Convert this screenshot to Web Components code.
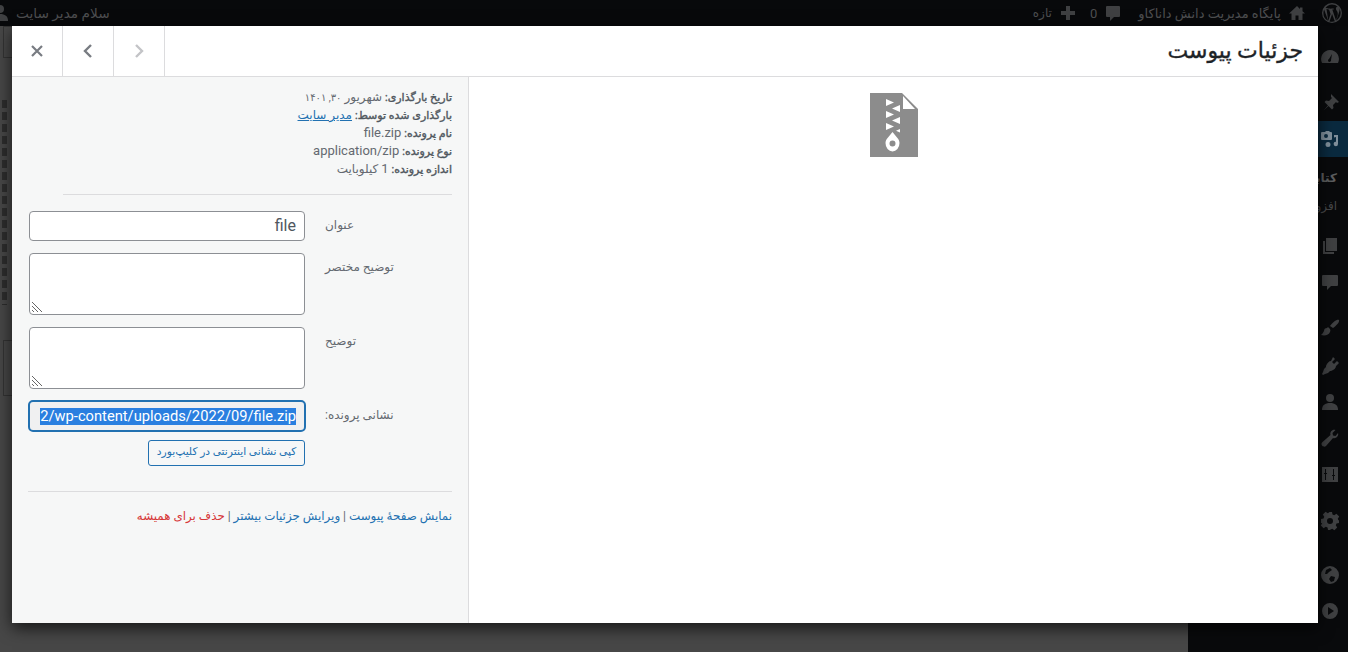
<!DOCTYPE html>
<html lang="fa" dir="rtl">
<head>
<meta charset="utf-8">
<title>جزئیات پیوست</title>
<style>
  html, body { margin: 0; height: 100%; overflow: hidden; background: #474747; }
  body { font-family: Roboto, "DejaVu Sans", sans-serif; }
</style>
</head>
<body>
<wp-backdrop></wp-backdrop>
<attachment-modal>
  <attachment-preview slot="preview"></attachment-preview>
  <attachment-details slot="details"></attachment-details>
</attachment-modal>

<script>
// the dimmed admin screen behind the modal
class WpBackdrop extends HTMLElement {
  constructor() {
    super();
    let shadowRoot = this.attachShadow({mode: 'open'});
    shadowRoot.innerHTML = `
      <style>
        :host {
          display: flex;
          flex-direction: column;
          height: 652px;
          color: #4e4f51;
          font-size: 13px;
        }
        .bar {
          height: 26px;
          flex: none;
          background: #08090b;
          display: flex;
          align-items: center;
          padding: 0 6px 0 0;
        }
        .bar svg { fill: #3f4042; display: block; }
        .item { display: flex; align-items: center; gap: 6px; margin-left: 15px; white-space: nowrap; }
        .spacer { flex: 1; }
        .hello { margin: 0; }
        .hello span { font-size: 13.7px; }
        .main { flex: 1; display: flex; min-height: 0; }
        .menu {
          width: 160px;
          flex: none;
          background: #090a0c;
          display: flex;
          flex-direction: column;
          align-items: flex-start;
          padding-top: 13px;
          box-sizing: border-box;
        }
        .menu svg { fill: #3f4042; display: block; }
        .menu .row { width: 160px; box-sizing: border-box; padding-right: 8px; height: 36px; display: flex; align-items: center; flex: none; }
        .menu .active { background: #0a2a3f; }
        .menu .active svg { fill: #7f8f9b; }
        .menu .sub { height: 28px; font-size: 12px; color: #47484a; display: flex; align-items: center; flex: none; padding-right: 11px; }
        .menu .sub.b { font-weight: bold; color: #5c5d5f; margin-top: 7px; }
        .content {
          flex: 1;
          background: #474747;
          display: flex;
          flex-direction: column;
          align-items: flex-end;
        }
        .ghost { width: 20px; margin-left: 3px; border: 1px solid #333; box-sizing: border-box; flex: none; }
        .dots {
          width: 5px;
          height: 205px;
          margin: 42px 0 0 2px;
          flex: none;
          background: repeating-linear-gradient(#2d2d2d 0 8px, transparent 8px 12px);
        }
      </style>
      <div class="bar">
        <div class="item"><svg width="20" height="20" viewBox="0 0 20 20"><path fill-rule="evenodd" d="M10 0a10 10 0 1 0 0 20 10 10 0 0 0 0-20zm0 1.400a8.600 8.600 0 0 1 5.800 2.300c-1-.1-1.900.6-1.900 1.700 0 1 .6 1.800 1.100 2.600.4.700.8 1.600.8 2.900 0 .9-.3 2-.8 3.400l-1 3.300-3.700-11c.6 0 1.200-.1 1.200-.1.6-.1.5-.9 0-.9 0 0-1.700.1-2.800.1-1 0-2.700-.1-2.700-.1-.6 0-.7.9-.1.9 0 0 .5.100 1.100.1l1.600 4.400-2.300 6.700L4.500 5.900c.6 0 1.200-.1 1.200-.1.6-.1.5-.9 0-.9 0 0-1.300.1-2.200.1A8.600 8.600 0 0 1 10 1.400zM1.400 10c0-1.200.3-2.400.7-3.500l4.100 11.300A8.600 8.600 0 0 1 1.400 10zm8.700 1 2.600 7.100c0 .1.100.1.100.2a8.600 8.600 0 0 1-5.300.1zm7-5.400c.9 1.300 1.500 2.800 1.500 4.400 0 3.200-1.700 6-4.300 7.400l2.600-7.600c.5-1.200.6-2.200.6-3 0-.3 0-.5-.4-.9z"/></svg></div>
        <div class="item"><svg width="20" height="20" viewBox="0 0 20 20"><path d="M10 3 2 10.500h2.500V17h4v-4.500h3V17h4v-6.500H18l-2.500-2.300V4.500h-2.500v1.400z"/></svg><span>پایگاه مدیریت دانش داناکاو</span></div>
        <div class="item" style="margin-left:12px"><svg width="20" height="20" viewBox="0 0 20 20"><path d="M4 3h12a1 1 0 0 1 1 1v9a1 1 0 0 1-1 1h-5l-4 4v-4H4a1 1 0 0 1-1-1V4a1 1 0 0 1 1-1z"/></svg><span>0</span></div>
        <div class="item"><svg width="20" height="20" viewBox="0 0 20 20"><path d="M8 3h4v5h5v4h-5v5H8v-5H3V8h5z"/></svg><span style="font-size:12px">تازه</span></div>
        <div class="spacer"></div>
        <div class="item hello"><span>سلام مدیر سایت</span><svg width="10" height="20" viewBox="10 0 10 20"><circle cx="10" cy="6" r="4"/><path d="M2 18c0-5 3-7 8-7s8 2 8 7z"/></svg></div>
      </div>
      <div class="main">
        <div class="menu">
          <div class="row"><svg width="20" height="20" viewBox="0 0 20 20"><path fill-rule="evenodd" d="M10 3a9 9 0 0 0-8 13h16a9 9 0 0 0-8-13zm1 10a1.500 1.500 0 1 1-2-1l3-5z"/></svg></div>
          <div class="row" style="margin-top:10px"><svg width="20" height="20" viewBox="0 0 20 20"><path d="M11 1l8 8-2 1-1-1-3 3 .5 3-1.500 1.500-3.500-3.500-5 4.500 4.500-5L4.500 9 6 7.500l3 .5 3-3-1-1z"/></svg></div>
          <div class="row active"><svg width="20" height="20" viewBox="0 0 20 20"><path d="M2 3h3l1-1h3l1 1h1a1 1 0 0 1 1 1v6a1 1 0 0 1-1 1H2a1 1 0 0 1-1-1V4a1 1 0 0 1 1-1zm4 2a2 2 0 1 0 0 4 2 2 0 0 0 0-4zM18 6v9a2.200 2.200 0 1 1-2-2.200V8l-2 .5V6zM8 13a2.500 2.500 0 1 1 0 5 2.500 2.500 0 0 1 0-5z"/></svg></div>
          <div class="sub b">کتابخانه</div>
          <div class="sub">افزودن</div>
          <div class="row" style="margin-top:8px"><svg width="20" height="20" viewBox="0 0 20 20"><path d="M6 2h11v13H6zM3 5h2v11h9v2H3z"/></svg></div>
          <div class="row"><svg width="20" height="20" viewBox="0 0 20 20"><path d="M3 3h14a1 1 0 0 1 1 1v9a1 1 0 0 1-1 1h-6l-4 4v-4H3a1 1 0 0 1-1-1V4a1 1 0 0 1 1-1z"/></svg></div>
          <div class="row" style="margin-top:10px"><svg width="20" height="20" viewBox="0 0 20 20"><path d="M19 2c-2-1-6 2-9 6l3 2c3-2 7-6 6-8zM8 9l-1 1c-2 0-3 1-3 3-1 2-2 3-3 4 4 1 8 0 9-3 .5-1 .5-2 0-3z"/></svg></div>
          <div class="row" style="margin-top:2px"><svg width="20" height="20" viewBox="0 0 20 20"><path d="M13 1l2 2-3 3 2 2 3-3 2 2-3 3c0 2-2 4-5 5h-1l-2 2-3 1-2 1-1-1 1-2 1-3 2-2v-1c1-3 3-5 5-5z"/></svg></div>
          <div class="row"><svg width="20" height="20" viewBox="0 0 20 20"><circle cx="10" cy="6" r="4"/><path d="M2 18c0-5 3-7 8-7s8 2 8 7z"/></svg></div>
          <div class="row"><svg width="20" height="20" viewBox="0 0 20 20"><path d="M18 5c1 3-2 6-5 5l-7 8c-1 1-3 1-4-.5s-.5-2.500.5-3.500l8-7c-1-3 2-6 5-5l-3 3 .5 2.500 2.500.5z"/></svg></div>
          <div class="row"><svg width="20" height="20" viewBox="0 0 20 20"><path fill-rule="evenodd" d="M2 3h16v15H2zm3 2v4H4v1h1v6h1v-6h1V9H6V5zm8 0v6h-1v1h1v4h1v-4h1v-1h-1V5z"/></svg></div>
          <div class="row" style="margin-top:11px"><svg width="20" height="20" viewBox="0 0 20 20"><path fill-rule="evenodd" d="M8 1h4l.5 2.500 1.700.7 2.200-1.400 2.800 2.800-1.400 2.200.7 1.700L19 9v3l-2.500.5-.7 1.700 1.400 2.200-2.800 2.800-2.200-1.400-1.700.7L10 19H8l-.5-2.500-1.700-.7-2.200 1.400-2.800-2.800 1.400-2.200L1 12V8l2.500-.5.7-1.700-1.400-2.200 2.800-2.800 2.200 1.400 1.700-.7zm2 6a3 3 0 1 0 0 6 3 3 0 0 0 0-6z"/></svg></div>
          <div class="row" style="margin-top:18px"><svg width="20" height="20" viewBox="0 0 20 20"><path fill-rule="evenodd" d="M10 1a9 9 0 1 0 0 18 9 9 0 0 0 0-18zM6 5l4-2 2 2-3 2-2 2H5zm5 6 4 1-1 4-3 1-2-3z"/></svg></div>
          <div class="row"><svg width="20" height="20" viewBox="0 0 20 20"><path fill-rule="evenodd" d="M10 2a8 8 0 1 0 0 16 8 8 0 0 0 0-16zM8 6l6 4-6 4z"/></svg></div>
        </div>
        <div class="content">
          <div class="ghost" style="height:32px"></div>
          <div class="dots"></div>
          <div class="ghost" style="height:56px;margin-top:35px"></div>
        </div>
      </div>
    `;
  }
}
customElements.define('wp-backdrop', WpBackdrop);

class AttachmentModal extends HTMLElement {
  constructor() {
    super();
    let shadowRoot = this.attachShadow({mode: 'open'});
    shadowRoot.innerHTML = `
      <style>
        :host {
          position: absolute;
          top: 26px;
          left: 12px;
          width: 1306px;
          height: 597px;
          background: #fff;
          display: flex;
          flex-direction: column;
          box-shadow: 0 5px 15px rgba(0,0,0,.7);
        }
        header {
          flex: none;
          height: 50px;
          display: flex;
          border-bottom: 1px solid #dcdcde;
        }
        h1 {
          flex: 1;
          margin: 0;
          padding: 0 15px;
          font-size: 22px;
          font-weight: 400;
          -webkit-text-stroke: .35px #1d2327;
          line-height: 50px;
          color: #1d2327;
        }
        .nav { display: flex; direction: ltr; order: 2; }
        .nav div {
          width: 50px;
          height: 50px;
          border-right: 1px solid #dcdcde;
          display: flex;
          align-items: center;
          justify-content: center;
        }
        svg { display: block; }
        .body { flex: 1; display: flex; min-height: 0; }
        .left {
          width: 456px;
          flex: none;
          order: 2;
          background: #f6f7f7;
          border-right: 1px solid #dcdcde;
        }
        .right { flex: 1; }
      </style>
      <header>
        <h1>جزئیات پیوست</h1>
        <div class="nav">
          <div><svg width="20" height="20" viewBox="0 0 20 20" fill="none" stroke="#787c82" stroke-width="2.200"><path d="M5 5l10 10M15 5 5 15"/></svg></div>
          <div><svg width="20" height="20" viewBox="0 0 20 20" fill="none" stroke="#787c82" stroke-width="2.400"><path d="M13 4 7 10l6 6"/></svg></div>
          <div><svg width="20" height="20" viewBox="0 0 20 20" fill="none" stroke="#c3c4c7" stroke-width="2.400"><path d="M7 4l6 6-6 6"/></svg></div>
        </div>
      </header>
      <div class="body">
        <div class="right"><slot name="preview"></slot></div>
        <div class="left"><slot name="details"></slot></div>
      </div>
    `;
  }
}
customElements.define('attachment-modal', AttachmentModal);

class AttachmentPreview extends HTMLElement {
  constructor() {
    super();
    let shadowRoot = this.attachShadow({mode: 'open'});
    shadowRoot.innerHTML = `
      <style>
        :host { display: flex; justify-content: center; padding-top: 16px; }
        svg { display: block; }
      </style>
      <svg width="48" height="64" viewBox="0 0 48 64">
        <path fill="#8c8c8c" fill-rule="evenodd" d="M0 0h32l16 16v48H0zM33 3v13h12z"/>
        <g fill="#fff">
          <path d="M16 6l8 3.500-8 3.500zM30 12v7l-8-3.500zM16 18l8 3.500-8 3.500zM30 24v7l-8-3.500zM16 30l8 3.500-8 3.500zM30 36v3.500l-4-1.700z"/>
          <path fill-rule="evenodd" d="M22.500 39l4.500 5.500c1.500 1.600 2.500 3.500 2.500 5.500a7 8.500 0 0 1-14 0c0-2 1-3.900 2.500-5.500zm0 8.500a3 3 0 1 0 0 6 3 3 0 0 0 0-6z"/>
        </g>
      </svg>
    `;
  }
}
customElements.define('attachment-preview', AttachmentPreview);

class SettingRow extends HTMLElement {
  constructor() {
    super();
    let shadowRoot = this.attachShadow({mode: 'open'});
    shadowRoot.innerHTML = `
      <style>
        :host {
          display: flex;
          margin: 0 16px 12px 0;
          width: 424px;
          font-size: 12px;
          color: #646970;
        }
        .name {
          width: 147px;
          flex: none;
          display: flex;
          justify-content: flex-end;
          padding: 7px 0 0 20px;
          box-sizing: border-box;
        }
        .field { flex: 1; min-width: 0; }
      </style>
      <div class="name"><span><slot name="label"></slot></span></div>
      <div class="field"><slot></slot></div>
    `;
  }
}
customElements.define('setting-row', SettingRow);

class AttachmentDetails extends HTMLElement {
  constructor() {
    super();
    let shadowRoot = this.attachShadow({mode: 'open'});
    shadowRoot.innerHTML = `
      <style>
        :host {
          display: block;
          height: 100%;
          font-size: 12px;
          color: #646970;
          padding-top: 11px;
          box-sizing: border-box;
        }
        .info { margin: 0 16px 0 0; line-height: 18px; }
        .info div { height: 18px; }
        .info b { color: #50575e; font-weight: 400; font-size: 11px; -webkit-text-stroke: .4px #50575e; }
        .info a { color: #2271b1; }
        .lat { font-size: 13px; }
        .num { font-size: 10px; }
        hr { border: 0; border-top: 1px solid #dcdcde; margin: 0; }
        .hr1 { margin: 16px 16px 16px 16px; width: 389px; }
        .box {
          width: 276px;
          box-sizing: border-box;
          border: 1px solid #8c8f94;
          border-radius: 4px;
          background: #fff;
          display: block;
        }
        .title {
          height: 30px;
          font-size: 16px;
          line-height: 27px;
          padding: 0 8px;
          color: #50575e;
          text-align: right;
        }
        .area { height: 62px; position: relative; }
        .area svg { position: absolute; left: 1px; bottom: 1px; }
        .url {
          width: 278px;
          height: 32px;
          margin: -1px -1px 0 0;
          border: 2px solid #2271b1;
          border-radius: 5px;
          background: #f0f0f1;
          direction: ltr;
          padding: 0 8px;
          font-size: 14.7px;
          color: #fff;
          display: flex;
          align-items: center;
        }
        .url div {
          flex: 1;
          min-width: 0;
          display: flex;
          justify-content: flex-end;
          white-space: nowrap;
        }
        .url span { background: #2a7fe0; line-height: 17px; flex: none; }
        .copy {
          display: block;
          width: 157px;
          height: 26px;
          box-sizing: border-box;
          margin: 8px 0 0 0;
          border: 1px solid #2271b1;
          border-radius: 3px;
          background: #f6f7f7;
          color: #2271b1;
          font: inherit;
          font-size: 10.7px;
          padding: 0 0 3px 0;
        }
        .hr2 { margin: 25px 16px 0 16px; }
        .links { margin: 16px 16px 0 0; line-height: 16px; font-size: 11.9px; }
        .links a { color: #2271b1; text-decoration: none; }
        .links .del { color: #d63638; }
      </style>
      <div class="info">
        <div><b>تاریخ بارگذاری:</b> شهریور <span class="num">۳۰, ۱۴۰۱</span></div>
        <div><b>بارگذاری شده توسط:</b> <a href="#">مدیر سایت</a></div>
        <div><b>نام پرونده:</b> <span class="lat">file.zip</span></div>
        <div><b>نوع پرونده:</b> <span class="lat">application/zip</span></div>
        <div><b>اندازه پرونده:</b> <span class="lat">1</span> کیلوبایت</div>
      </div>
      <hr class="hr1">
      <setting-row><span slot="label">عنوان</span><div class="box title">file</div></setting-row>
      <setting-row><span slot="label">توضیح مختصر</span><div class="box area"><svg width="12" height="12" viewBox="0 0 12 12" fill="none" stroke="#666" stroke-width="1"><path d="M1 1l10 10M1 5l6 6M1 9l2 2"/></svg></div></setting-row>
      <setting-row><span slot="label">توضیح</span><div class="box area"><svg width="12" height="12" viewBox="0 0 12 12" fill="none" stroke="#666" stroke-width="1"><path d="M1 1l10 10M1 5l6 6M1 9l2 2"/></svg></div></setting-row>
      <setting-row><span slot="label">نشانی پرونده:</span>
        <div class="box url"><div><span>2/wp-content/uploads/2022/09/file.zip</span></div></div>
        <button class="copy">کپی نشانی اینترنتی در کلیپ‌بورد</button>
      </setting-row>
      <hr class="hr2">
      <div class="links"><a href="#">نمایش صفحهٔ پیوست</a> | <a href="#">ویرایش جزئیات بیشتر</a> | <a href="#" class="del">حذف برای همیشه</a></div>
    `;
  }
}
customElements.define('attachment-details', AttachmentDetails);
</script>
</body>
</html>
